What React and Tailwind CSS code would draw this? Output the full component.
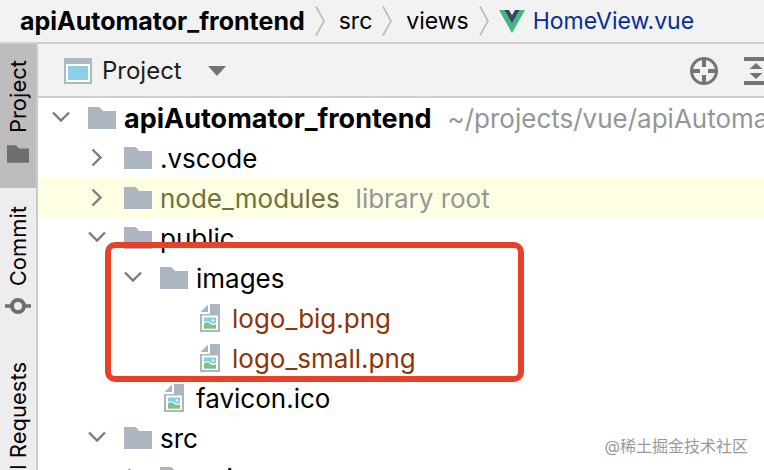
import { useState } from 'react'
import clsx from 'clsx'

const rows = [
  { id: 'root', level: 0, kind: 'folder', open: true, label: 'apiAutomator_frontend', note: '~/projects/vue/apiAutomator_frontend', bold: true },
  { id: 'vscode', level: 1, kind: 'folder', label: '.vscode' },
  { id: 'node_modules', level: 1, kind: 'folder', label: 'node_modules', note: 'library root', library: true },
  { id: 'public', level: 1, kind: 'folder', open: true, label: 'public' }
]

const highlighted = [
  { id: 'images', level: 2, kind: 'folder', open: true, label: 'images' },
  { id: 'logo_big', level: 3, kind: 'image', label: 'logo_big.png', untracked: true },
  { id: 'logo_small', level: 3, kind: 'image', label: 'logo_small.png', untracked: true }
]

const rest = [
  { id: 'favicon', level: 2, kind: 'image', label: 'favicon.ico' },
  { id: 'src', level: 1, kind: 'folder', open: true, label: 'src' },
  { id: 'api', level: 2, kind: 'folder', label: 'api' }
]

const indents = ['pl-[10px]', 'pl-[46px]', 'pl-[82px]', 'pl-[118px]']

function FolderIcon({ className }) {
  return (
    <svg viewBox="0 0 28 22" className={className} aria-hidden="true">
      <path d="M0 0h10.5q1.2 0 2 1l2.5 3h13v18H0z" fill="currentColor" />
    </svg>
  )
}

function ImageFileIcon() {
  return (
    <svg viewBox="0 0 20 28" className="h-7 w-5" aria-hidden="true">
      <path d="M0.5 8L8 0.5V8z" fill="#a9b4bd" />
      <path d="M10 0h10v28H0V10h10z" fill="#abb6bf" />
      <path d="M2 11.500h16v14.500H2z" fill="#fff" />
      <path d="M4 13.500h12v11H4z" fill="#7fcdee" />
      <path d="M4 19.500q3-2.500 6 0t6 .5v4.500H4z" fill="#80c278" />
      <circle cx="13" cy="16.500" r="1.300" fill="#fff" />
      <path d="M4 19q3-2.500 6 0t6 .5" fill="none" stroke="#fff" strokeWidth="1.200" />
    </svg>
  )
}

function Chevron({ open }) {
  return (
    <svg viewBox="0 0 26 26" className="h-[26px] w-[26px]" fill="none" stroke="#7d7d7d" strokeWidth="2.4" aria-hidden="true">
      <path d={open ? 'M5 7.5l8 8 8-8' : 'M8.500 4.500l8 8-8 8'} />
    </svg>
  )
}

function BreadcrumbArrow() {
  return (
    <svg viewBox="0 0 10 30" className="h-[30px] w-[10px] shrink-0" fill="none" stroke="#bdbdbd" strokeWidth="1.7" aria-hidden="true">
      <path d="M1 0.5l8 14.5-8 14.5" />
    </svg>
  )
}

function VueIcon() {
  return (
    <svg viewBox="0 0 26 23" className="h-[23px] w-[26px]" aria-hidden="true">
      <path d="M0 0h5.2L13 13.5 20.8 0H26L13 23z" fill="#41b883" />
      <path d="M5.2 0H10l3 5.2L16 0h4.8L13 13.5z" fill="#35495e" />
    </svg>
  )
}

function TreeRow({ row }) {
  const [open, setOpen] = useState(!!row.open)
  const folder = row.kind === 'folder'

  return (
    <li className={clsx('flex h-10 items-center whitespace-nowrap', indents[row.level], row.library && 'bg-[#fdfee2]')}>
      {folder ? (
        <button type="button" aria-label={`Toggle ${row.label}`} aria-expanded={open} onClick={() => setOpen(!open)} className="mr-[14px] shrink-0">
          <Chevron open={open} />
        </button>
      ) : (
        <span className="mr-[14px] w-[26px] shrink-0" />
      )}
      <span className="flex w-7 shrink-0 justify-center">
        {folder ? <FolderIcon className="h-[22px] w-7 text-[#abb6c0]" /> : <ImageFileIcon />}
      </span>
      <span
        className={clsx(
          'ml-2 pt-[2px]',
          row.bold && 'text-[27px] font-bold',
          row.library && 'text-[#71713c]',
          row.untracked && 'text-[#8f3308]'
        )}
      >
        {row.label}
      </span>
      {row.note && <span className="ml-4 pt-[2px] text-[#969696]">{row.note}</span>}
    </li>
  )
}

export default function App() {
  return (
    <div className="relative flex h-screen flex-col overflow-hidden bg-white [font-family:Inter,'Noto_Sans_CJK_SC',sans-serif] text-[24px] leading-10 text-black">
      <nav aria-label="Breadcrumb" className="flex h-11 shrink-0 items-center gap-[10px] border-b-2 border-[#cfcfcf] bg-[#f2f2f2] pl-5 text-[23px] whitespace-nowrap">
        <a href="#root" className="text-[25px] font-bold">apiAutomator_frontend</a>
        <BreadcrumbArrow />
        <a href="#src" className="ml-1">src</a>
        <BreadcrumbArrow />
        <a href="#views" className="ml-1">views</a>
        <BreadcrumbArrow />
        <a href="#home" className="flex items-center gap-2 text-[#052f97]">
          <VueIcon />
          HomeView.vue
        </a>
      </nav>

      <div className="flex min-h-0 flex-1">
        <aside className="flex w-[38px] shrink-0 flex-col border-r-2 border-[#cbcbcb] bg-[#ededed] text-[22px] leading-8">
          <button type="button" className="flex h-36 shrink-0 flex-col items-center gap-3 bg-[#bdbdbd] pt-4">
            <span className="rotate-180 [writing-mode:vertical-rl]">Project</span>
            <FolderIcon className="h-[18px] w-[22px] text-[#6e6e6e]" />
          </button>
          <button type="button" className="mt-[18px] flex shrink-0 flex-col items-center gap-3">
            <span className="rotate-180 [writing-mode:vertical-rl]">Commit</span>
            <svg viewBox="0 0 26 16" className="h-4 w-[26px]" fill="none" stroke="#6e6e6e" aria-hidden="true">
              <circle cx="13" cy="8" r="6" strokeWidth="4" />
              <path d="M0 8h6M20 8h6" strokeWidth="3.4" />
            </svg>
          </button>
          <button type="button" className="mt-12 flex shrink-0 flex-col items-center">
            <span className="rotate-180 [writing-mode:vertical-rl]">Pull Requests</span>
          </button>
        </aside>

        <main className="min-w-0 flex-1">
          <header className="flex h-[54px] items-center border-b-2 border-[#cfcfcf] bg-[#f2f2f2] pt-[2px] pl-[26px]">
            <button type="button" className="flex items-center text-[#1c1c1c]">
              <svg viewBox="0 0 28 26" className="mr-[10px] h-[26px] w-7" aria-hidden="true">
                <path d="M0 0h28v26H0z" fill="#afb8be" />
                <path d="M2 6h24v18H2z" fill="#fff" />
                <path d="M4 8h20v14H4z" fill="#8fcfe6" />
              </svg>
              Project
              <svg viewBox="0 0 18 10" className="ml-[26px] h-[10px] w-[18px]" aria-hidden="true">
                <path d="M0 0h18L9 10z" fill="#737373" />
              </svg>
            </button>
            <div className="ml-auto flex shrink-0 items-center gap-[26px] overflow-hidden">
              <button type="button" aria-label="Select opened file">
                <svg viewBox="0 0 28 28" className="h-7 w-7" fill="none" stroke="#747474" aria-hidden="true">
                  <circle cx="14" cy="14" r="12.5" strokeWidth="3" />
                  <path d="M14 2v8M14 18v8M2 14h8M18 14h8" strokeWidth="4" />
                </svg>
              </button>
              <button type="button" aria-label="Expand all" className="-mr-1">
                <svg viewBox="0 0 24 28" className="h-7 w-6" fill="#747474" aria-hidden="true">
                  <path d="M0 0h24v4H0zM0 24h24v4H0zM5.500 12L12 6l6.500 6zM5.500 16L12 22l6.500-6z" />
                </svg>
              </button>
            </div>
          </header>

          <ul aria-label="Project files" className="text-[26px]">
            {rows.map((row) => (
              <TreeRow key={row.id} row={row} />
            ))}
            <li className="relative">
              <ul>
                {highlighted.map((row) => (
                  <TreeRow key={row.id} row={row} />
                ))}
              </ul>
              <div className="pointer-events-none absolute -top-4 -bottom-1 left-[67px] w-[419px] rounded-[10px] border-6 border-[#e94127]" />
            </li>
            {rest.map((row) => (
              <TreeRow key={row.id} row={row} />
            ))}
          </ul>
        </main>
      </div>

      <p className="absolute right-4 bottom-3 text-[16px] leading-6 text-[#999999]">@稀土掘金技术社区</p>
    </div>
  )
}
